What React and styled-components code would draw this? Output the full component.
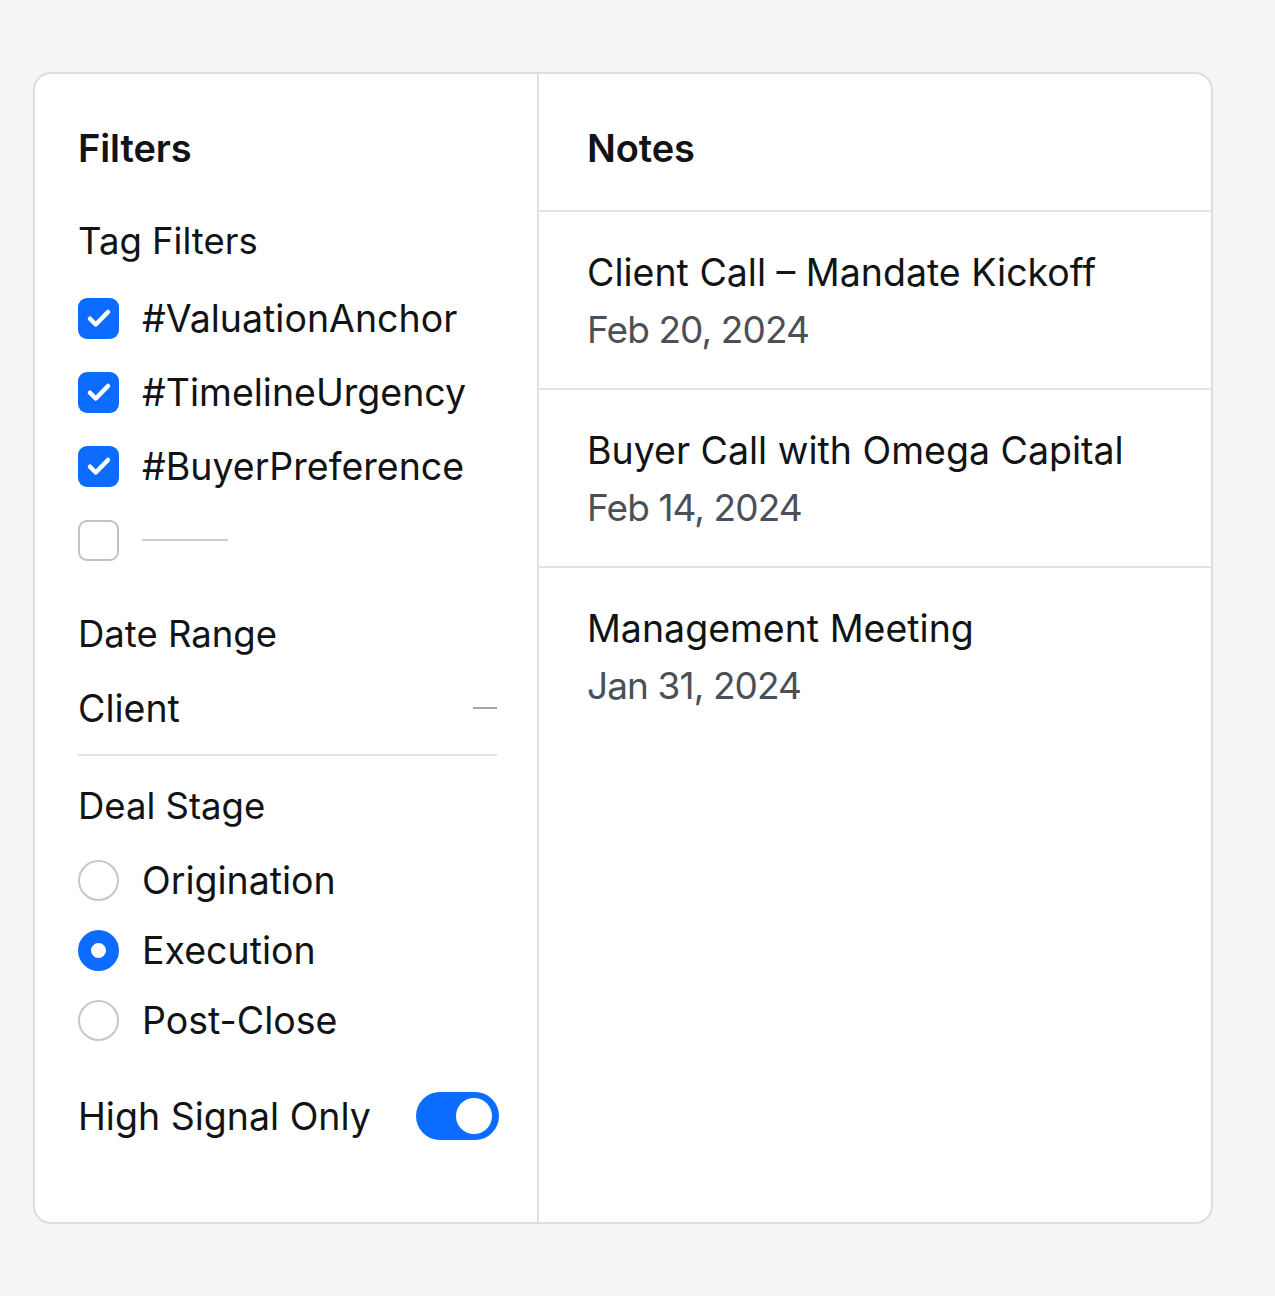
import React from "react";
import styled, { createGlobalStyle } from "styled-components";

const Global = createGlobalStyle`
  html, body { margin: 0; padding: 0; background: #f5f5f5; }
  body { font-family: Inter, "Noto Sans", "Liberation Sans", sans-serif; color: #111315; }
  * { box-sizing: border-box; }
`;

const Page = styled.div`
  padding: 72px 0 0 33px;
  min-height: 1296px;
`;

const Card = styled.div`
  width: 1180px;
  height: 1152px;
  background: #fff;
  border: 2px solid #d9dee3;
  border-radius: 18px;
  display: grid;
  grid-template-columns: 504px 1fr;
  overflow: hidden;
`;

const FilterPane = styled.aside`
  border-right: 2px solid #dfe3e8;
  padding: 52px 38px 0 43px;
  display: flex;
  flex-direction: column;
`;

const PaneTitle = styled.h2`
  margin: 0;
  font-size: 38px;
  line-height: 44px;
  font-weight: 600;
  letter-spacing: -0.1px;
`;

const SectionLabel = styled.div`
  font-size: 36.5px;
  line-height: 44px;
  margin-top: ${(p) => p.$mt}px;
`;

const CheckList = styled.div`
  display: flex;
  flex-direction: column;
  margin-top: 18px;
`;

const CheckRow = styled.label`
  display: flex;
  align-items: center;
  gap: 23px;
  height: 74px;
  font-size: 37.5px;
`;

const Box = styled.span`
  width: 41px;
  height: 41px;
  border-radius: 9px;
  flex: none;
  display: flex;
  align-items: center;
  justify-content: center;
  background: ${(p) => (p.$on ? "#0b6cff" : "#fff")};
  border: ${(p) => (p.$on ? "none" : "2.5px solid #bcc3ca")};
`;

const Placeholder = styled.span`
  width: 86px;
  height: 2px;
  background: #c9ced4;
`;

const SelectRow = styled.div`
  display: flex;
  align-items: center;
  justify-content: space-between;
  height: 44px;
  margin-top: 30px;
  font-size: 37.5px;
`;

const Dash = styled.span`
  width: 24px;
  height: 2px;
  background: #9ea6ae;
  margin-right: 2px;
`;

const Rule = styled.div`
  height: 2px;
  background: #dfe3e8;
  margin-top: 24px;
  margin-right: 2px;
`;

const RadioList = styled.div`
  display: flex;
  flex-direction: column;
  margin-top: 17px;
`;

const RadioRow = styled.label`
  display: flex;
  align-items: center;
  gap: 23px;
  height: 70px;
  font-size: 37.5px;
`;

const Radio = styled.span`
  width: 41px;
  height: 41px;
  border-radius: 50%;
  flex: none;
  background: #fff;
  border: ${(p) => (p.$on ? "13px solid #0b6cff" : "2.5px solid #c2c8ce")};
`;

const ToggleRow = styled.div`
  display: flex;
  align-items: center;
  justify-content: space-between;
  height: 48px;
  margin-top: 37px;
  font-size: 37.5px;
`;

const Toggle = styled.span`
  width: 83px;
  height: 48px;
  border-radius: 24px;
  background: #0b6cff;
  display: flex;
  align-items: center;
  justify-content: flex-end;
  padding-right: 7px;
`;

const Knob = styled.span`
  width: 36px;
  height: 36px;
  border-radius: 50%;
  background: #fff;
`;

const NotesPane = styled.section`
  display: flex;
  flex-direction: column;
`;

const NotesHeader = styled.div`
  height: 138px;
  padding: 52px 48px 0 48px;
  border-bottom: 2px solid #dfe3e8;
`;

const NoteItem = styled.div`
  padding: 39px 48px 36px 48px;
  border-bottom: ${(p) => (p.$last ? "none" : "2px solid #dfe3e8")};
`;

const NoteTitle = styled.div`
  font-size: 37.5px;
  line-height: 44px;
`;

const NoteDate = styled.div`
  font-size: 37px;
  line-height: 44px;
  margin-top: 13px;
  color: #4b5058;
  letter-spacing: -0.9px;
`;

const Check = () => (
  <svg width="30" height="30" viewBox="0 0 24 24" fill="none">
    <path d="M4.8 12.6l4.6 4.6 9.8-10" stroke="#fff" strokeWidth="3.6" strokeLinecap="round" strokeLinejoin="round" />
  </svg>
);

const tags = ["#ValuationAnchor", "#TimelineUrgency", "#BuyerPreference"];
const stages = [
  { label: "Origination", on: false },
  { label: "Execution", on: true },
  { label: "Post-Close", on: false },
];
const notes = [
  { title: "Client Call – Mandate Kickoff", date: "Feb 20, 2024" },
  { title: "Buyer Call with Omega Capital", date: "Feb 14, 2024" },
  { title: "Management Meeting", date: "Jan 31, 2024" },
];

export default function App() {
  return (
    <>
      <Global />
      <Page>
        <Card>
          <FilterPane>
            <PaneTitle>Filters</PaneTitle>
            <SectionLabel $mt={49}>Tag Filters</SectionLabel>
            <CheckList>
              {tags.map((t) => (
                <CheckRow key={t}>
                  <Box $on>
                    <Check />
                  </Box>
                  {t}
                </CheckRow>
              ))}
              <CheckRow>
                <Box />
                <Placeholder />
              </CheckRow>
            </CheckList>
            <SectionLabel $mt={35}>Date Range</SectionLabel>
            <SelectRow>
              Client
              <Dash />
            </SelectRow>
            <Rule />
            <SectionLabel $mt={28}>Deal Stage</SectionLabel>
            <RadioList>
              {stages.map((s) => (
                <RadioRow key={s.label}>
                  <Radio $on={s.on} />
                  {s.label}
                </RadioRow>
              ))}
            </RadioList>
            <ToggleRow>
              High Signal Only
              <Toggle>
                <Knob />
              </Toggle>
            </ToggleRow>
          </FilterPane>
          <NotesPane>
            <NotesHeader>
              <PaneTitle>Notes</PaneTitle>
            </NotesHeader>
            {notes.map((n, i) => (
              <NoteItem key={n.title} $last={i === notes.length - 1}>
                <NoteTitle>{n.title}</NoteTitle>
                <NoteDate>{n.date}</NoteDate>
              </NoteItem>
            ))}
          </NotesPane>
        </Card>
      </Page>
    </>
  );
}
